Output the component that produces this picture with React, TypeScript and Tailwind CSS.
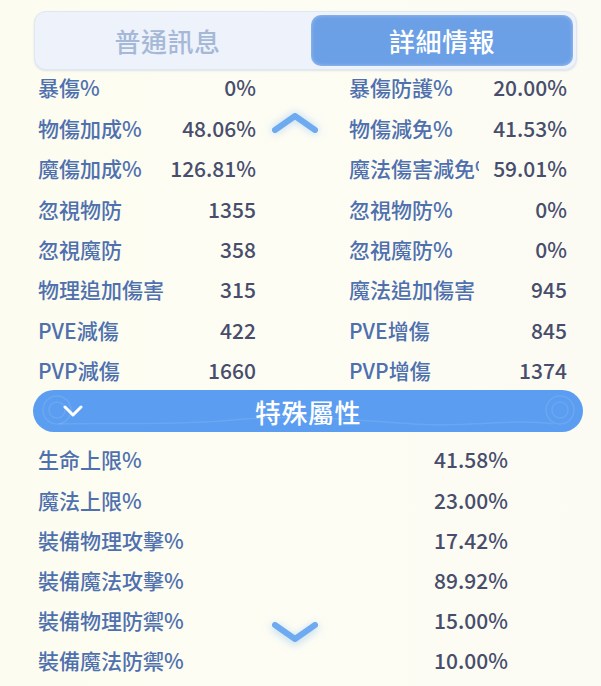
import React from 'react'

const font = { fontFamily: '"Noto Sans CJK TC", "Noto Sans", sans-serif' }

const topRows: [string, string, string, string][] = [
  ['暴傷%', '0%', '暴傷防護%', '20.00%'],
  ['物傷加成%', '48.06%', '物傷減免%', '41.53%'],
  ['魔傷加成%', '126.81%', '魔法傷害減免%', '59.01%'],
  ['忽視物防', '1355', '忽視物防%', '0%'],
  ['忽視魔防', '358', '忽視魔防%', '0%'],
  ['物理追加傷害', '315', '魔法追加傷害', '945'],
  ['PVE減傷', '422', 'PVE增傷', '845'],
  ['PVP減傷', '1660', 'PVP增傷', '1374'],
]

const specialRows: [string, string][] = [
  ['生命上限%', '41.58%'],
  ['魔法上限%', '23.00%'],
  ['裝備物理攻擊%', '17.42%'],
  ['裝備魔法攻擊%', '89.92%'],
  ['裝備物理防禦%', '15.00%'],
  ['裝備魔法防禦%', '10.00%'],
]

function Chevron({ up, className }: { up?: boolean; className?: string }) {
  return (
    <svg viewBox="0 0 48 24" className={className}>
      <path
        d={up ? 'M4 20 L24 6 L44 20' : 'M4 4 L24 18 L44 4'}
        fill="none"
        stroke="#6eaaf0"
        strokeWidth="6"
        strokeLinecap="round"
        strokeLinejoin="round"
      />
    </svg>
  )
}

export default function App() {
  return (
    <div
      className="relative w-[601px] h-[686px] overflow-hidden bg-gradient-to-r from-[#fcfcf0] via-[#fdfdf4] to-[#fbfbf3]"
      style={font}
    >
      {/* tabs */}
      <div className="pt-[11px] pl-[34px] pr-[24px]">
        <div className="flex h-[59px] rounded-[12px] bg-[#edf2fb] border border-[#dfe7f4] p-[3px] shadow-[0_1px_2px_rgba(150,170,200,0.3)]">
          <div className="flex-1 flex items-center justify-center pr-[14px] text-[26px] font-medium text-[#a5b8d7] tracking-[0.5px]">
            普通訊息
          </div>
          <div className="w-[262px] flex items-center justify-center rounded-[10px] bg-[#6b9fe6] text-[26px] font-medium text-white tracking-[0.5px] shadow-[inset_0_0_4px_rgba(255,255,255,0.4)]">
            詳細情報
          </div>
        </div>
      </div>

      {/* detail grid */}
      <div className="relative -mt-[2px] pl-[38px]">
        {topRows.map(([l1, v1, l2, v2]) => (
          <div key={l1} className="flex items-center h-[40.4px] text-[21px] font-medium">
            <div className="w-[218px] flex items-center justify-between">
              <span className="text-[#4f70ae]">{l1}</span>
              <span className="text-[#484d6c]">{v1}</span>
            </div>
            <div className="ml-[93px] w-[218px] flex items-center justify-between">
              <span className="w-[130px] overflow-hidden whitespace-nowrap text-[#4f70ae]">{l2}</span>
              <span className="text-[#484d6c]">{v2}</span>
            </div>
          </div>
        ))}
        <Chevron up className="absolute left-[271px] top-[42px] w-[48px] h-[24px] drop-shadow-[0_0_4px_rgba(110,170,240,0.5)]" />
      </div>

      {/* special banner */}
      <div className="px-[18px] pl-[33px] mt-[-1px]">
        <div className="relative flex items-center h-[42px] rounded-full bg-[#5b9df0] overflow-hidden">
          <svg className="absolute inset-0 w-full h-full" viewBox="0 0 550 42" preserveAspectRatio="none">
            <g fill="none" stroke="#ffffff" strokeOpacity="0.1" strokeWidth="1.5">
              <circle cx="24" cy="20" r="14" />
              <circle cx="24" cy="20" r="8" />
              <path d="M26 34 C 80 32, 140 36, 200 30 S 330 30, 380 34 S 480 28, 520 34" />
              <circle cx="527" cy="20" r="14" />
              <circle cx="527" cy="20" r="8" />
            </g>
          </svg>
          <svg viewBox="0 0 20 12" className="relative ml-[30px] w-[20px] h-[12px]">
            <path d="M2 2 L10 10 L18 2" fill="none" stroke="#ffffff" strokeWidth="3" strokeLinecap="round" strokeLinejoin="round" />
          </svg>
          <div className="relative flex-1 text-center text-white text-[26px] font-medium tracking-[0.5px] pr-[50px]">特殊屬性</div>
        </div>
      </div>

      {/* special rows */}
      <div className="relative pt-[8px] pl-[38px]">
        {specialRows.map(([l, v]) => (
          <div key={l} className="flex items-center h-[40.2px] text-[21px] font-medium">
            <span className="w-[396px] text-[#4f70ae]">{l}</span>
            <span className="w-[73px] text-right text-[#484d6c]">{v}</span>
          </div>
        ))}
        <Chevron className="absolute left-[271px] top-[189px] w-[48px] h-[24px] drop-shadow-[0_2px_4px_rgba(110,170,240,0.5)]" />
      </div>
    </div>
  )
}
